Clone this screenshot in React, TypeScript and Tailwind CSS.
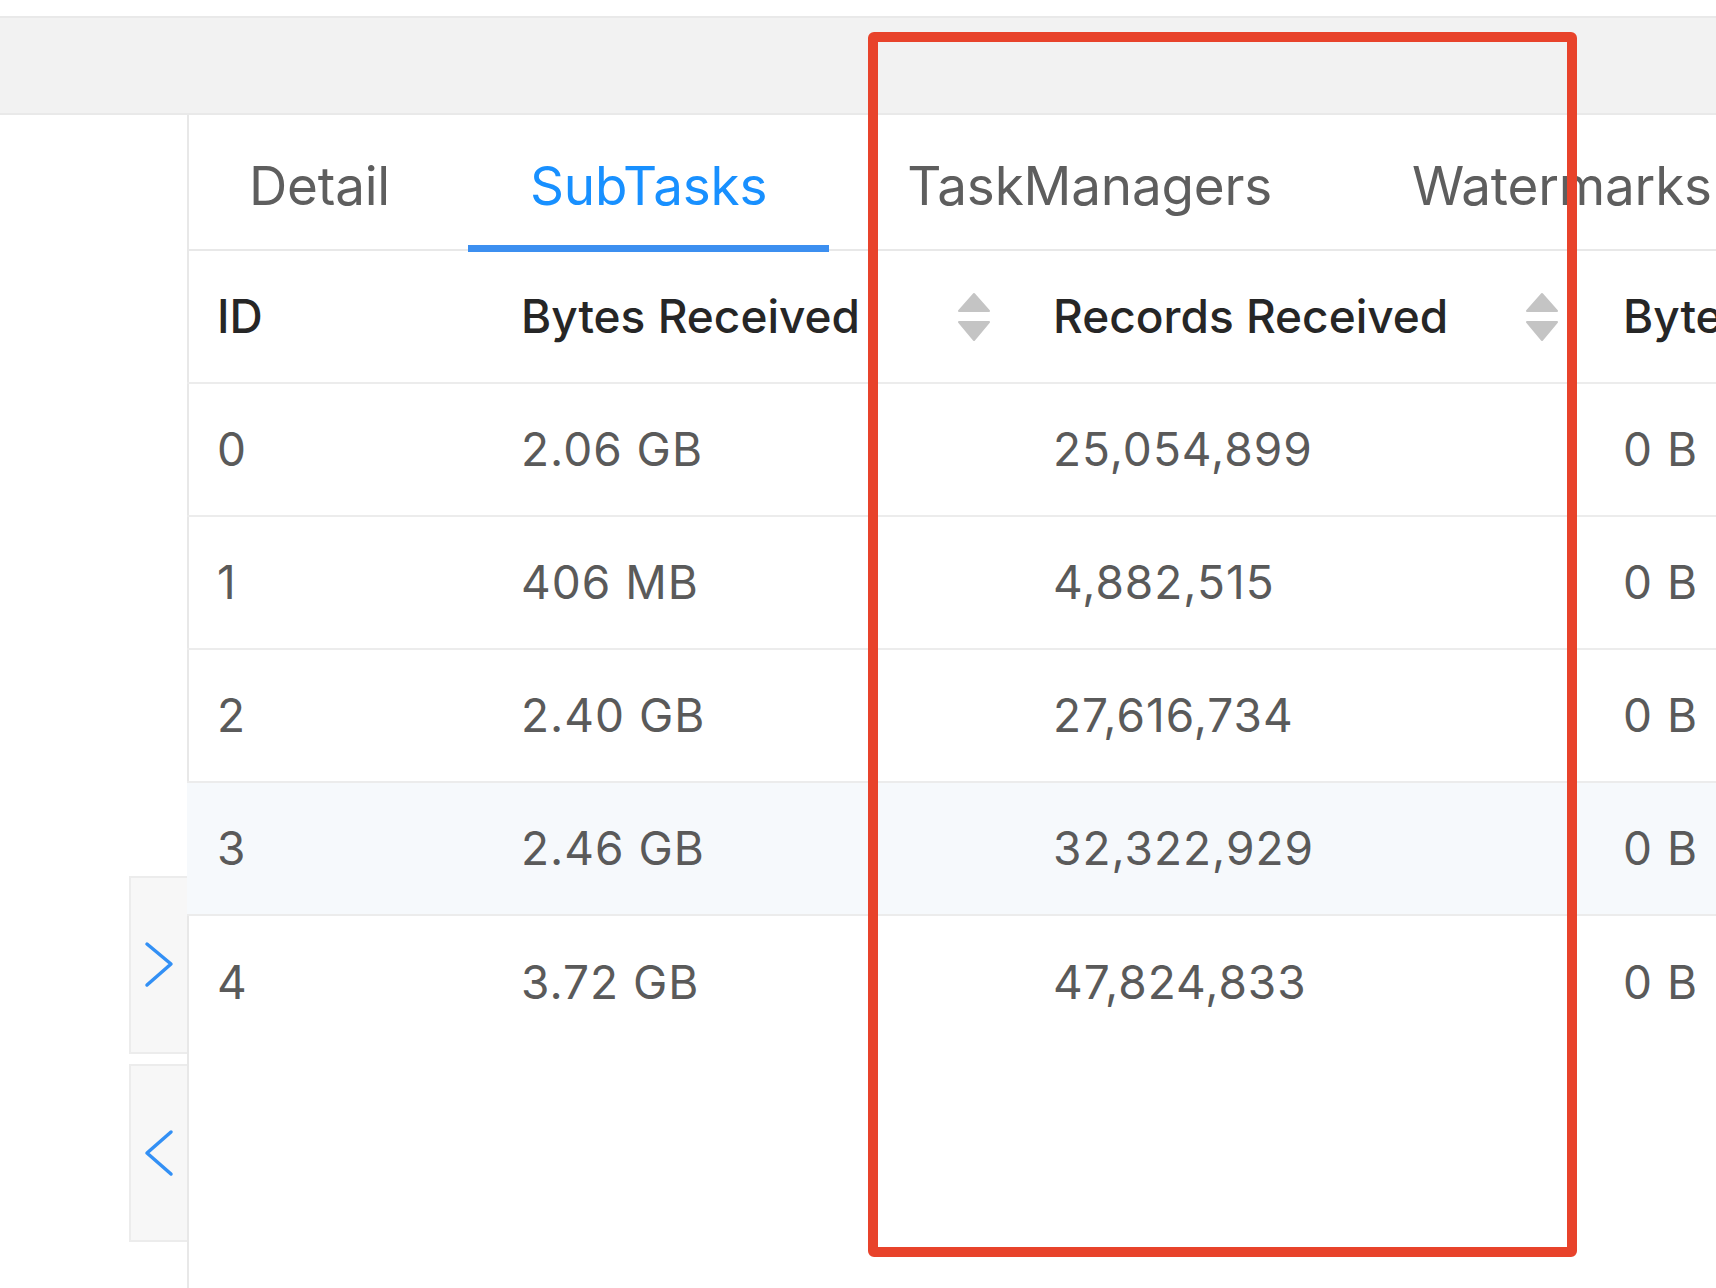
import React from 'react';

// subtask metrics rows
interface SubTaskRow {
  id: number;
  bytesReceived: string;
  recordsReceived: string;
  bytesSent: string;
}

const rows: SubTaskRow[] = [
  { id: 0, bytesReceived: '2.06 GB', recordsReceived: '25,054,899', bytesSent: '0 B' },
  { id: 1, bytesReceived: '406 MB', recordsReceived: '4,882,515', bytesSent: '0 B' },
  { id: 2, bytesReceived: '2.40 GB', recordsReceived: '27,616,734', bytesSent: '0 B' },
  { id: 3, bytesReceived: '2.46 GB', recordsReceived: '32,322,929', bytesSent: '0 B' },
  { id: 4, bytesReceived: '3.72 GB', recordsReceived: '47,824,833', bytesSent: '0 B' },
];

const tabs = ['Detail', 'SubTasks', 'TaskManagers', 'Watermarks'];

const Sorter = () => (
  <svg width="34" height="50" viewBox="0 0 34 50" className="shrink-0">
    <path d="M17 2 L32 19 L2 19 Z" fill="#c4c4c4" strokeLinejoin="round" stroke="#c4c4c4" strokeWidth="2" />
    <path d="M2 30 L32 30 L17 48 Z" fill="#c4c4c4" strokeLinejoin="round" stroke="#c4c4c4" strokeWidth="2" />
  </svg>
);

const Chevron = ({ dir }: { dir: 'left' | 'right' }) => (
  <svg width="32" height="48" viewBox="0 0 32 48">
    <path
      d={dir === 'right' ? 'M4 3 L28 23 L4 44' : 'M28 3 L4 24 L28 45'}
      fill="none"
      stroke="#3390f5"
      strokeWidth="3.5"
      strokeLinecap="round"
      strokeLinejoin="round"
    />
  </svg>
);

const cols = 'grid grid-cols-[304px_532px_570px_400px]';

const App = () => {
  return (
    <div
      className="relative w-[1716px] h-[1288px] overflow-hidden bg-white"
      style={{ fontFamily: 'Inter, "Liberation Sans", sans-serif' }}
    >
      {/* top band */}
      <div className="h-[16px] bg-white" />
      <div className="h-[99px] bg-[#f2f2f2] border-t-2 border-b-2 border-[#e9e9e9]" />

      <div className="flex h-[1173px]">
        {/* left collapse buttons */}
        <div className="w-[187px] shrink-0 flex flex-col items-end pt-[761px] gap-[10px]">
          <button className="w-[58px] h-[178px] flex items-center justify-center bg-[#f7f7f7] border-2 border-r-0 border-[#ececec]">
            <Chevron dir="right" />
          </button>
          <button className="w-[58px] h-[178px] flex items-center justify-center bg-[#f7f7f7] border-2 border-r-0 border-[#ececec]">
            <Chevron dir="left" />
          </button>
        </div>

        {/* main panel */}
        <div className="flex-1 border-l-2 border-[#e8e8e8] min-w-0">
          {/* tabs */}
          <div className="flex h-[136px] gap-[16px] border-b-2 border-[#e8e8e8] -ml-[2px]">
            {tabs.map((tab) => {
              const active = tab === 'SubTasks';
              return (
                <div
                  key={tab}
                  className={`relative shrink-0 flex items-center pt-[10px] px-[62px] text-[53px] tracking-[-0.2px] ${
                    active ? 'text-[#1890ff]' : 'text-[#5e5e5e]'
                  }`}
                >
                  {tab}
                  {active && (
                    <div className="absolute left-0 right-0 bottom-[-3px] h-[7px] bg-[#3c8ff0]" />
                  )}
                </div>
              );
            })}
          </div>

          {/* table */}
          <div className="text-[46px] -ml-[2px]">
            <div className={`${cols} h-[133px] border-b-2 border-[#ececec] font-medium text-[#262626]`}>
              <div className="flex items-center pl-[30px]">ID</div>
              <div className="flex items-center justify-between pl-[30px] pr-[32px]">
                <span>Bytes Received</span>
                <Sorter />
              </div>
              <div className="flex items-center justify-between pl-[30px] pr-[34px]">
                <span>Records Received</span>
                <Sorter />
              </div>
              <div className="flex items-center pl-[30px] whitespace-nowrap">Bytes Sent</div>
            </div>

            {rows.map((row, index) => (
              <div
                key={row.id}
                className={`${cols} h-[133px] text-[#5a5a5a] tracking-[1px] ${
                  index === 3 ? 'bg-[#f6f9fc]' : ''
                } ${index < rows.length - 1 ? 'border-b-2 border-[#ececec]' : ''}`}
              >
                <div className="flex items-center pl-[30px]">{row.id}</div>
                <div className="flex items-center pl-[30px]">{row.bytesReceived}</div>
                <div className="flex items-center pl-[30px]">{row.recordsReceived}</div>
                <div className="flex items-center pl-[30px]">{row.bytesSent}</div>
              </div>
            ))}
          </div>
        </div>
      </div>

      {/* red annotation box */}
      <div className="absolute left-[868px] top-[32px] w-[709px] h-[1225px] border-[10px] border-[#e8432b] rounded-[6px] pointer-events-none" />
    </div>
  );
};

export default App;
